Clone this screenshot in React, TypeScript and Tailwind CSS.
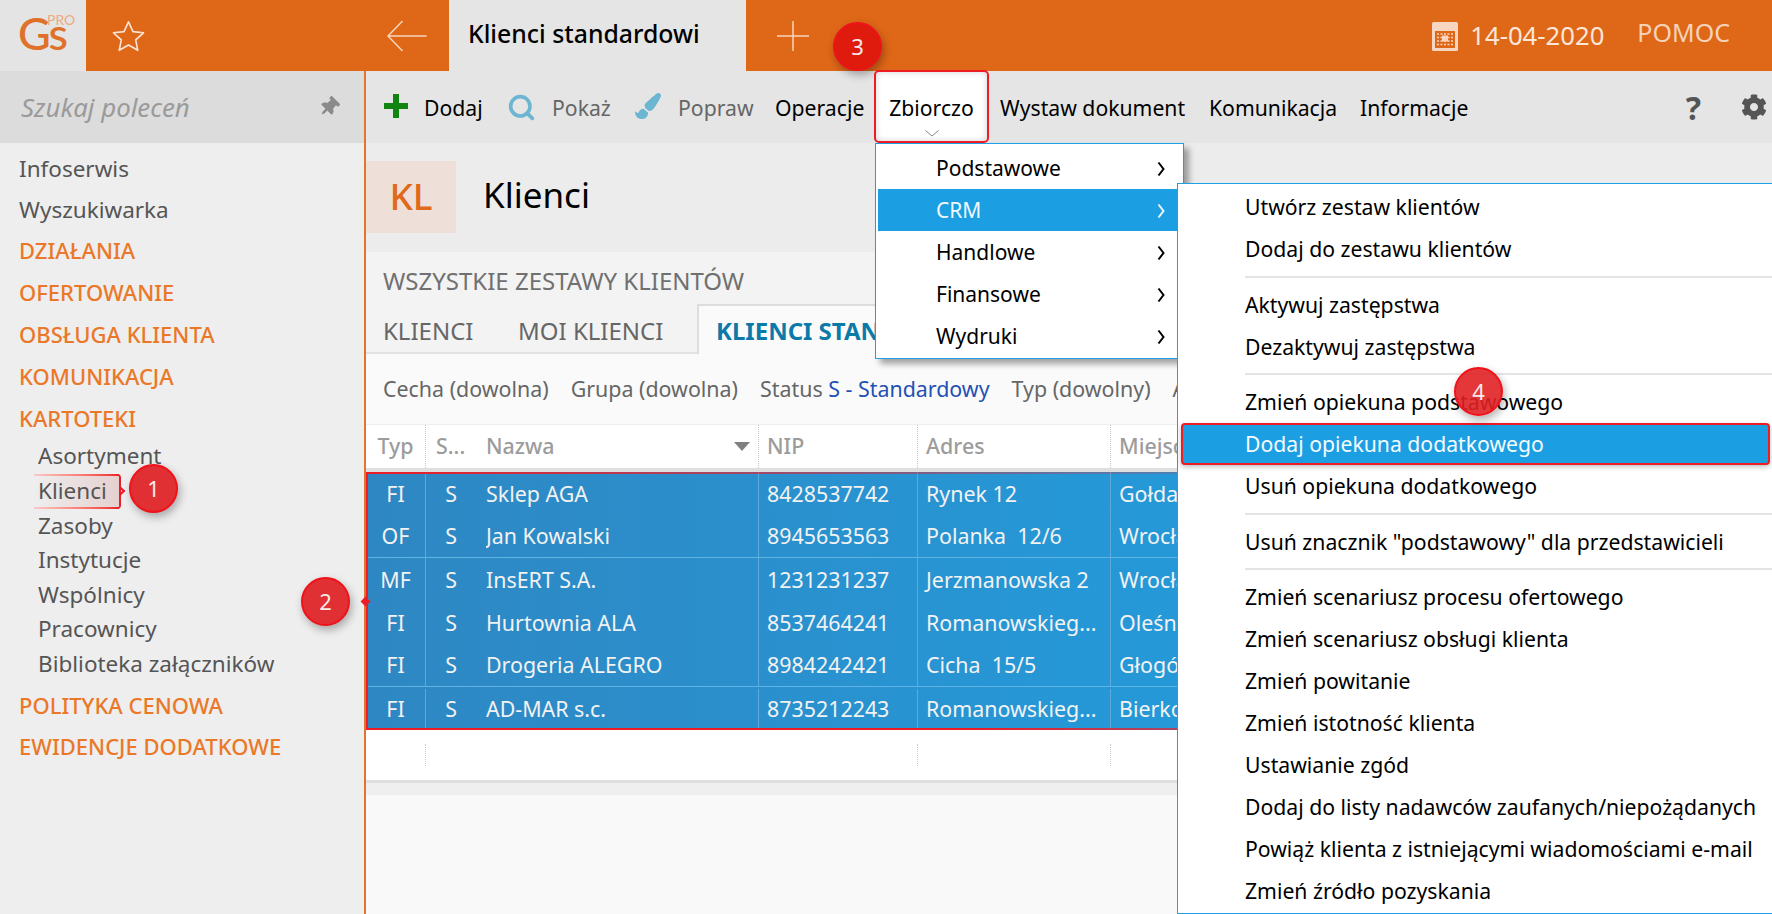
import { Search } from 'lucide-react';
import { FaCog, FaPaintBrush, FaThumbtack } from 'react-icons/fa';

const nav = [
  { label: 'Infoserwis', kind: 'link' },
  { label: 'Wyszukiwarka', kind: 'link' },
  { label: 'DZIAŁANIA', kind: 'head' },
  { label: 'OFERTOWANIE', kind: 'head' },
  { label: 'OBSŁUGA KLIENTA', kind: 'head' },
  { label: 'KOMUNIKACJA', kind: 'head' },
  { label: 'KARTOTEKI', kind: 'head' },
];

const kartoteki = ['Asortyment', 'Klienci', 'Zasoby', 'Instytucje', 'Wspólnicy', 'Pracownicy', 'Biblioteka załączników'];

const rows = [
  { typ: 'FI', name: 'Sklep AGA', nip: '8428537742', addr: 'Rynek 12', city: 'Gołdap', h: 'h-[44px]' },
  { typ: 'OF', name: 'Jan Kowalski', nip: '8945653563', addr: 'Polanka  12/6', city: 'Wrocław', h: 'h-[42px] border-b border-[#5fb4e4]' },
  { typ: 'MF', name: 'InsERT S.A.', nip: '1231231237', addr: 'Jerzmanowska 2', city: 'Wrocław', h: 'h-[45px]' },
  { typ: 'FI', name: 'Hurtownia ALA', nip: '8537464241', addr: 'Romanowskieg...', city: 'Oleśnica', h: 'h-[41px]' },
  { typ: 'FI', name: 'Drogeria ALEGRO', nip: '8984242421', addr: 'Cicha  15/5', city: 'Głogów', h: 'h-[43px] border-b border-[#5fb4e4]' },
  { typ: 'FI', name: 'AD-MAR s.c.', nip: '8735212243', addr: 'Romanowskieg...', city: 'Bierkowice', h: 'h-[43px] pt-[2px]' },
];

const crmGroups = [
  ['Utwórz zestaw klientów', 'Dodaj do zestawu klientów'],
  ['Aktywuj zastępstwa', 'Dezaktywuj zastępstwa'],
  ['Zmień opiekuna podstawowego', 'Dodaj opiekuna dodatkowego', 'Usuń opiekuna dodatkowego'],
  ['Usuń znacznik "podstawowy" dla przedstawicieli'],
  [
    'Zmień scenariusz procesu ofertowego',
    'Zmień scenariusz obsługi klienta',
    'Zmień powitanie',
    'Zmień istotność klienta',
    'Ustawianie zgód',
    'Dodaj do listy nadawców zaufanych/niepożądanych',
    'Powiąż klienta z istniejącymi wiadomościami e-mail',
    'Zmień źródło pozyskania',
  ],
];

function Chevron({ className }: { className: string }) {
  return (
    <svg width="8" height="16" viewBox="0 0 8 16" fill="none" className={className}>
      <path d="M1.5 1.5 6.5 8l-5 6.5" stroke="currentColor" strokeWidth="2" />
    </svg>
  );
}

function Badge({ n, className }: { n: number; className: string }) {
  return (
    <div className={`absolute w-[49px] h-[49px] rounded-full border-2 border-[#f0121a] flex items-center justify-center text-[22px] text-[#fbe9e9] shadow-[2px_4px_8px_rgba(0,0,0,0.3)] ${className}`}>
      {n}
    </div>
  );
}

function Cell({ className, children }: { className: string; children: React.ReactNode }) {
  return <div className={`h-full flex items-center whitespace-pre overflow-hidden ${className}`}>{children}</div>;
}

export default function App() {
  return (
    <div className="relative w-[1772px] h-[914px] overflow-hidden font-['Noto_Sans',sans-serif] text-[21.4px] bg-[#eeeeee]">
      {/* top bar */}
      <div className="flex h-[71px] bg-[#df6718]">
        <div className="relative w-[86px] bg-[#e4e4e4]">
          <span className="absolute left-[18px] top-[24px] text-[45px] leading-[18px] font-['Lato',sans-serif] font-medium text-[#e0712a] tracking-[-2px]">Gs</span>
          <span className="absolute left-[47px] top-[17px] text-[14px] leading-[6px] font-['Lato',sans-serif] text-[#eeaa80]">PRO</span>
        </div>
        <div className="w-[363px] flex items-center justify-between pl-[26px] pr-[22px]">
          <svg width="33" height="32" viewBox="0 0 33 32" fill="none" className="text-[#fbe6d8]">
            <path d="M16.5 1.8 21 11.6l10.5 1.2-7.8 7.1 2.1 10.4-9.3-5.3-9.3 5.3 2.1-10.4-7.8-7.1L12 11.6z" stroke="currentColor" strokeWidth="1.6" strokeLinejoin="round" />
          </svg>
          <svg width="40" height="32" viewBox="0 0 40 32" fill="none" className="text-[#f7d5bd]">
            <path d="M15.5 1 1 16l14.5 15M1 16h38.5" stroke="currentColor" strokeWidth="1.5" />
          </svg>
        </div>
        <div className="w-[297px] bg-[#e5e5e5] flex items-center pl-[19px] pb-[4px] text-[24.8px] font-medium text-black">Klienci standardowi</div>
        <div className="flex-1 flex items-center pl-[31px]">
          <svg width="32" height="32" viewBox="0 0 32 32" fill="none" className="text-[#f7d5bd]">
            <path d="M16 1v30M0 16h32" stroke="currentColor" strokeWidth="1.5" />
          </svg>
        </div>
        <div className="flex items-start pr-[42px]">
          <svg width="26" height="29" viewBox="0 0 26 29" className="mt-[22px] mr-[12px]">
            <rect width="26" height="29" rx="1.5" fill="#f6d6c0" />
            <rect x="3" y="9" width="20" height="17" fill="#df6718" />
            <path d="M5 12h16M5 15.5h16M5 19h16M5 22.5h16" stroke="#f6d6c0" strokeWidth="1.6" strokeDasharray="2 1.5" />
            <rect x="10" y="13.5" width="6" height="6" fill="#f6d6c0" />
          </svg>
          <span className="mt-[18px] mr-[33px] text-[25.7px] leading-[36px] text-[#fbe6d8]">14-04-2020</span>
          <span className="mt-[14px] text-[25px] leading-[36px] text-[#f6d2b8]">POMOC</span>
        </div>
      </div>

      <div className="flex h-[843px]">
        {/* sidebar */}
        <aside className="w-[364px] shrink-0 bg-[#eeeeee]">
          <div className="h-[72px] bg-[#dcdcdc] flex items-center justify-between pl-[21px] pr-[25px]">
            <span className="italic text-[25.8px] text-[#9a9a9a]">Szukaj poleceń</span>
            <FaThumbtack size={20} className="rotate-45 text-[#8a8a8a]" />
          </div>
          <div className="pl-[19px] pt-[5px] text-[22.5px] text-[#555555]">
            {nav.map((n) => (
              <div
                key={n.label}
                className={n.kind === 'head' ? 'h-[41.8px] flex items-center font-medium text-[22px] text-[#ea7828]' : 'h-[41px] flex items-center'}
              >
                {n.label}
              </div>
            ))}
            <div className="pl-[19px]">
              {kartoteki.map((k) => (
                <div key={k} className="relative h-[34.6px] flex items-center">
                  {k === 'Klienci' && (
                    <div className="absolute -left-[4px] top-0 w-[87px] h-[35px] rounded-r-[4px] bg-gradient-to-r from-transparent to-[#e6d0d0] border-r-2 border-[#ee1c25]">
                      <div className="absolute inset-x-0 top-0 h-[2px] bg-gradient-to-r from-[#f8c8c8] to-[#ee1c25]" />
                      <div className="absolute inset-x-0 bottom-0 h-[2px] bg-gradient-to-r from-[#f8c8c8] to-[#ee1c25]" />
                      <div className="absolute -right-[5px] top-[14px] w-[6px] h-[6px] rotate-45 border-t-2 border-r-2 border-[#ee1c25]" />
                    </div>
                  )}
                  <span className="relative">{k}</span>
                </div>
              ))}
            </div>
            <div className="h-[41.8px] mt-[3px] flex items-center font-medium text-[22px] text-[#ea7828]">POLITYKA CENOWA</div>
            <div className="h-[41.8px] flex items-center font-medium text-[22px] text-[#ea7828]">EWIDENCJE DODATKOWE</div>
          </div>
        </aside>

        {/* main */}
        <main className="flex-1 min-w-0 border-l-[2px] border-[#e0762e] bg-[#f9f9f9]">
          <div className="h-[72px] bg-[#e5e5e5] flex items-center pl-[18px] pt-[2px] text-[21.2px] text-black whitespace-nowrap">
            <svg width="24" height="24" viewBox="0 0 24 24" className="mr-[16px] mb-[4px] shrink-0">
              <path d="M9 0h6v9h9v6h-9v9H9v-9H0V9h9z" fill="#118411" />
            </svg>
            <span className="w-[83px]">Dodaj</span>
            <Search size={29} strokeWidth={3} className="w-[45px] pr-[16px] mb-[2px] text-[#6db6d2]" />
            <span className="w-[83px] text-[#666666]">Pokaż</span>
            <FaPaintBrush size={26} className="w-[43px] pr-[17px] mb-[4px] text-[#6db6d2]" />
            <span className="w-[97px] text-[#666666]">Popraw</span>
            <span className="w-[99px]">Operacje</span>
            <div className="relative z-10 w-[115px] h-[73px] mb-[3px] pt-[3px] rounded-[5px] border-2 border-[#ee1c25] bg-white shadow-[inset_0_0_6px_rgba(0,0,0,0.18)] flex items-center justify-center">
              <span>Zbiorczo</span>
              <svg width="14" height="7" viewBox="0 0 14 7" fill="none" className="absolute left-[49px] bottom-[4px] text-[#888888]">
                <path d="M.5.5 7 6 13.5.5" stroke="currentColor" />
              </svg>
            </div>
            <span className="ml-[11px] w-[209px]">Wystaw dokument</span>
            <span className="w-[151px]">Komunikacja</span>
            <span>Informacje</span>
            <span className="ml-auto mr-[40px] text-[32px] font-bold text-[#555555]">?</span>
            <FaCog size={26} className="mr-[5px] mb-[2px] text-[#555555]" />
          </div>

          <div className="h-[109px] bg-[#ececec] flex items-start pt-[18px]">
            <div className="w-[90px] h-[72px] pb-[3px] bg-[#eee0d9] flex items-center justify-center text-[37px] font-medium text-[#e0691b]">KL</div>
            <div className="h-[72px] pb-[3px] flex items-center pl-[27px] text-[35px] text-black">Klienci</div>
          </div>

          <div className="h-[102px] bg-[#f3f3f3] border-b-2 border-[#e2e2e2] text-[24px]">
            <div className="h-[52px] flex items-end pl-[17px] pb-[5px] text-[#707070]">WSZYSTKIE ZESTAWY KLIENTÓW</div>
            <div className="h-[50px] flex items-end text-[#666666]">
              <div className="w-[152px] h-full flex items-center pl-[17px] pt-[4px]">KLIENCI</div>
              <div className="w-[179px] h-full flex items-center pt-[4px]">MOI KLIENCI</div>
              <div className="h-[50px] w-[178px] overflow-hidden flex items-center bg-[#fafafa] border-t-2 border-l-2 border-[#dddddd] pl-[17px] pt-[2px] font-bold text-[#0b7aa8] whitespace-nowrap">KLIENCI STANDARDOWI</div>
            </div>
          </div>

          <div className="h-[70px] bg-[#fafafa] flex items-center pl-[17px] gap-[22px] text-[#666666] whitespace-nowrap overflow-hidden">
            <span>Cecha (dowolna)</span>
            <span>Grupa (dowolna)</span>
            <span>Status <span className="text-[#1f50b4]">S - Standardowy</span></span>
            <span>Typ (dowolny)</span>
            <span>Adres</span>
          </div>

          {/* table */}
          <div className="h-[48px] bg-white border-t border-[#eeeeee] border-b-[4px] border-b-[#dfdfdf] flex items-center font-medium text-[#9c9c9c]">
            <Cell className="w-[60px] justify-center border-r border-dotted border-[#c4c4c4]">Typ</Cell>
            <Cell className="w-[60px] pl-[10px]">S...</Cell>
            <Cell className="w-[273px] justify-between pr-[8px] border-r border-dotted border-[#c4c4c4]">
              Nazwa
              <svg width="16" height="9" viewBox="0 0 16 9"><path d="M0 0h16L8 9z" fill="#808080" /></svg>
            </Cell>
            <Cell className="w-[159px] pl-[8px] border-r border-dotted border-[#c4c4c4]">NIP</Cell>
            <Cell className="w-[193px] pl-[8px] border-r border-dotted border-[#c4c4c4]">Adres</Cell>
            <Cell className="flex-1 pl-[8px]">Miejscowość</Cell>
          </div>

          <div className="relative bg-gradient-to-r from-[#2e87c2] via-[#2697d6] to-[#1c9fe2] text-[#f2f2f2] h-[258px]">
            {rows.map((r) => (
              <div key={r.nip} className={`flex items-center ${r.h}`}>
                <Cell className="w-[60px] justify-center border-r border-[#5fa9d8]">{r.typ}</Cell>
                <Cell className="w-[60px] justify-center pr-[10px]">S</Cell>
                <Cell className="w-[273px] border-r border-[#5fa9d8]">{r.name}</Cell>
                <Cell className="w-[159px] pl-[8px] border-r border-[#5fa9d8]">{r.nip}</Cell>
                <Cell className="w-[193px] pl-[8px] border-r border-[#5fa9d8]">{r.addr}</Cell>
                <Cell className="flex-1 pl-[8px]">{r.city}</Cell>
              </div>
            ))}
            <div className="absolute left-0 top-0 bottom-0 w-[2px] bg-[#ee1c25] rounded-l" />
            <div className="absolute left-0 top-0 right-[400px] h-[2px] bg-gradient-to-r from-[#ee1c25] to-transparent" />
            <div className="absolute left-0 bottom-0 right-[200px] h-[2px] bg-gradient-to-r from-[#ee1c25] via-[#ee1c25] to-transparent" />
            <div className="absolute -left-[4px] top-[126px] w-[7px] h-[7px] rotate-45 bg-[#ee1c25]" />
          </div>

          <div className="h-[53px] bg-white border-b-[3px] border-[#dedede] flex">
            <div className="w-[60px] my-[14px] border-r border-dotted border-[#cccccc]" />
            <div className="w-[333px]" />
            <div className="w-[159px] my-[14px] border-r border-dotted border-[#cccccc]" />
            <div className="w-[193px] my-[14px] border-r border-dotted border-[#cccccc]" />
          </div>
          <div className="h-[12px] bg-[#efefef]" />
        </main>
      </div>

      {/* Zbiorczo menu */}
      <div className="absolute left-[875px] top-[143px] w-[309px] h-[216px] bg-white border-[1.5px] border-[#1ea0e6] pl-[2px] pt-[3px] shadow-[5px_5px_6px_rgba(0,0,0,0.35)] text-[21px]">
        {['Podstawowe', 'CRM', 'Handlowe', 'Finansowe', 'Wydruki'].map((m) => (
          <div key={m} className={`h-[42px] flex items-center justify-between pl-[58px] pr-[17px] pt-[2px] ${m === 'CRM' ? 'bg-[#1c9fe2] text-[#eef8fe]' : 'text-black'}`}>
            {m}
            <Chevron className="mr-[1px]" />
          </div>
        ))}
      </div>

      {/* CRM submenu */}
      <div className="absolute left-[1177px] top-[183px] w-[595px] h-[731px] bg-white border-[1.5px] border-[#1ea0e6] border-r-0 pt-[2px] text-black text-[21.2px]">
        {crmGroups.map((group, i) => (
          <div key={group[0]}>
            {i > 0 && (
              <div className="h-[13.5px] flex items-center pl-[67px]">
                <div className="h-[2px] w-full bg-[#e4e4e4]" />
              </div>
            )}
            {group.map((item) => (
              <div
                key={item}
                className={`h-[42px] flex items-center whitespace-nowrap ${item === 'Dodaj opiekuna dodatkowego' ? 'relative ml-[3px] pl-[62px] mr-[2px] rounded-[4px] border-2 border-[#ee1c25] bg-[#1c9fe2] text-[#f4fbff] shadow-[0_2px_5px_rgba(0,0,0,0.25)]' : 'pl-[67px]'}`}
              >
                {item}
              </div>
            ))}
          </div>
        ))}
      </div>

      <Badge n={1} className="left-[129px] top-[464px] bg-[#e03033]" />
      <Badge n={2} className="left-[301px] top-[577px] bg-[#e03033]" />
      <Badge n={3} className="left-[833px] top-[22px] bg-[#de1b0c]" />
      <Badge n={4} className="left-[1454px] top-[367px] bg-[#e02125]/90" />
    </div>
  );
}
